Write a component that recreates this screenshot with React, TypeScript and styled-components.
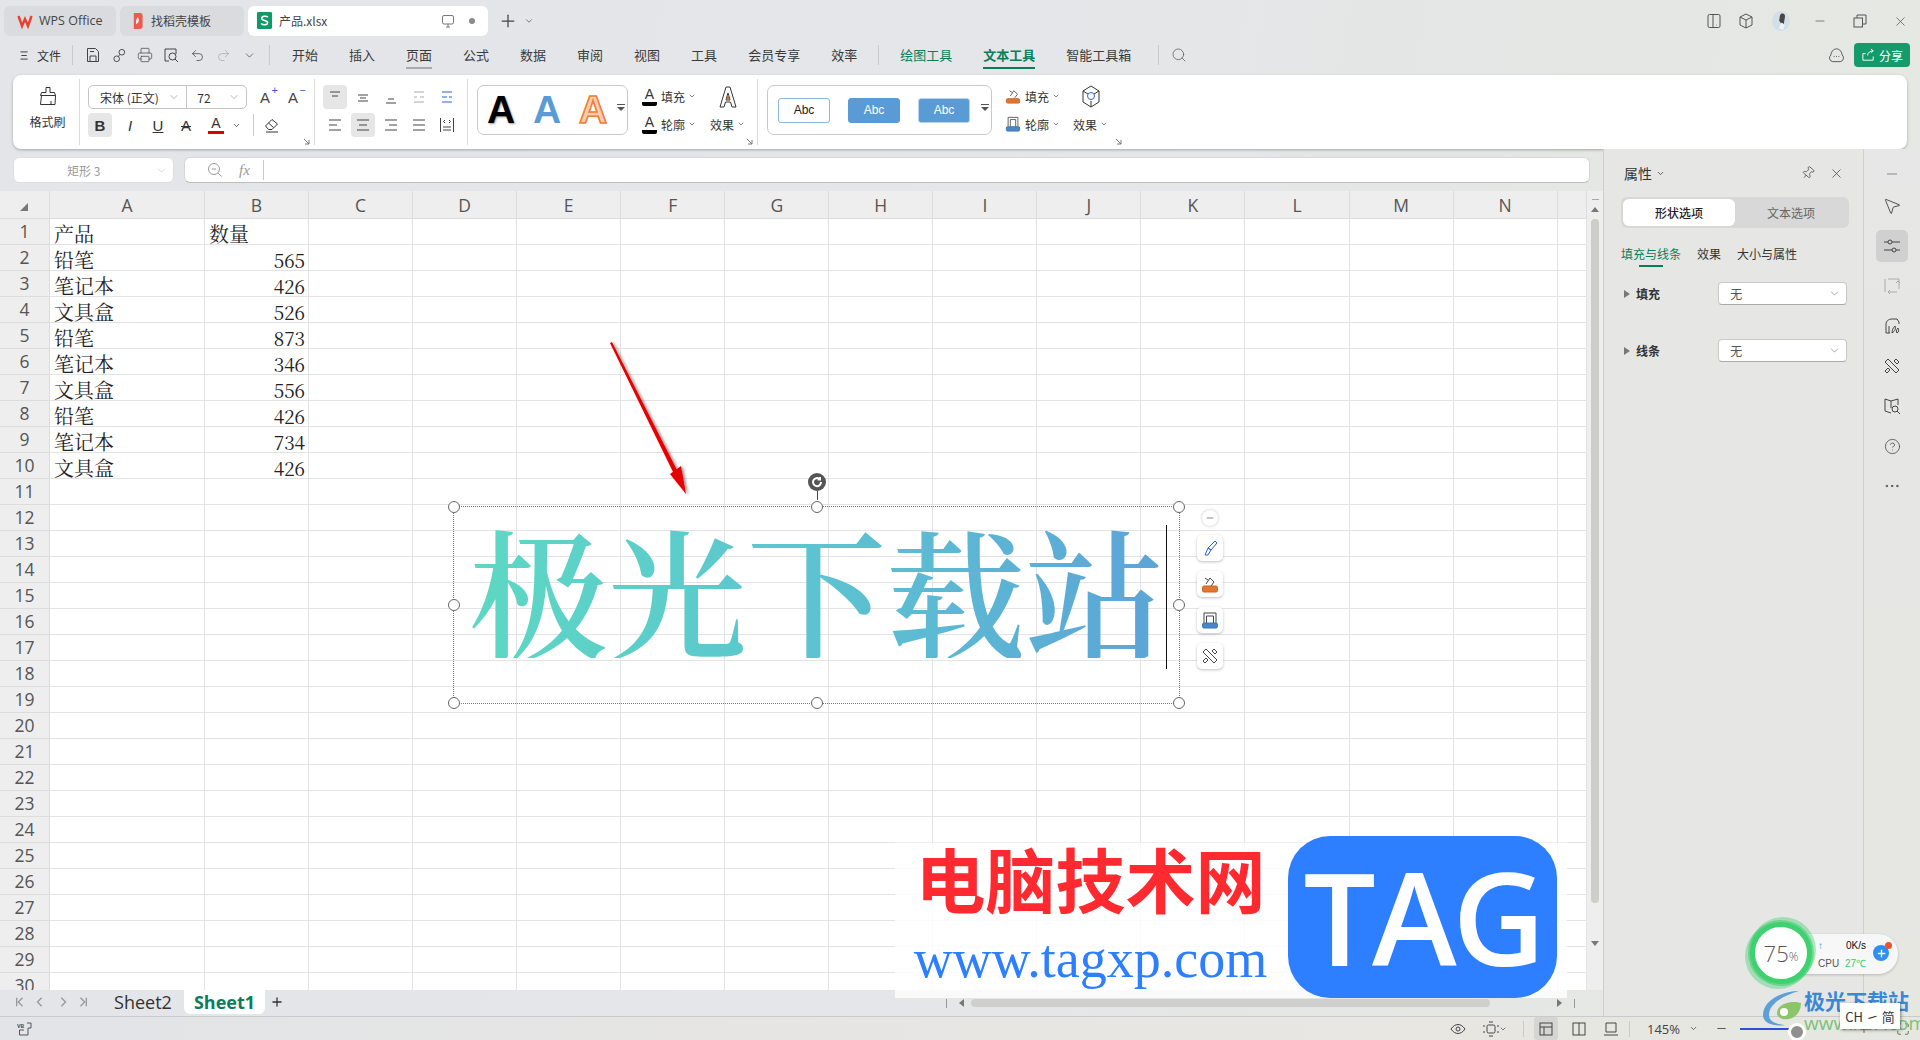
import React from "react";
import styled, { createGlobalStyle, css } from "styled-components";
import {
  ChevronDown,
  CircleHelp,
  Ellipsis,
  Maximize,
  Minus,
  MousePointer2,
  Pin,
  Plus,
  Printer,
  Redo2,
  Search,
  Undo2,
  X,
} from "lucide-react";

const UI_FONT = `"Noto Sans CJK SC", "Open Sans", sans-serif`;
const CELL_FONT = `"Noto Serif CJK SC", "Liberation Serif", "Noto Sans CJK SC", serif`;

const GlobalStyle = createGlobalStyle`
  html, body { margin: 0; padding: 0; background: #e4e6e6; }
  * { box-sizing: border-box; }
`;

const Page = styled.div`
  position: relative;
  width: 1920px;
  height: 1040px;
  overflow: hidden;
  display: flex;
  flex-direction: column;
  font-family: ${UI_FONT};
  font-size: 12px;
  color: #333;
  background: linear-gradient(100deg, #e3e5e9 0%, #e4e6e8 55%, #e6e8e1 100%);
`;

const Ic = styled.svg<{ $s?: number }>`
  width: ${(p) => p.$s ?? 16}px;
  height: ${(p) => p.$s ?? 16}px;
  flex: none;
  fill: none;
  stroke: currentColor;
  stroke-width: 1;
`;

/* ---------- title bar ---------- */

const TitleBar = styled.div`
  height: 37px;
  padding: 6px 0 1px 4px;
  display: flex;
  align-items: stretch;
  gap: 4px;
`;

const Tab = styled.div<{ $w: number; $active?: boolean }>`
  width: ${(p) => p.$w}px;
  display: flex;
  align-items: center;
  padding-left: 13px;
  padding-bottom: 1px;
  gap: 6px;
  border-radius: 6px;
  background: ${(p) => (p.$active ? "#fff" : "#d9dbde")};
  &:nth-child(2) { padding-left: 9px; }
  &:nth-child(3) { padding-left: 8px; }
`;

const TabLabel = styled.span<{ $latin?: boolean }>`
  font-family: ${(p) => (p.$latin ? `"Open Sans", sans-serif` : UI_FONT)};
  font-size: ${(p) => (p.$latin ? 12.5 : 12)}px;
  color: #444;
  white-space: nowrap;
`;

const TabRight = styled.div`
  margin-left: auto;
  display: flex;
  align-items: center;
  gap: 14px;
  padding-right: 13px;
  color: #777;
`;

const SmallDot = styled.i`
  width: 6px;
  height: 6px;
  border-radius: 50%;
  background: #8a8a8a;
`;

const NewTab = styled.div`
  display: flex;
  align-items: center;
  gap: 6px;
  margin-left: 6px;
  color: #444;
`;

const TitleRight = styled.div`
  margin-left: auto;
  display: flex;
  align-items: center;
  color: #555;
`;

const TitleBtn = styled.div<{ $w: number }>`
  width: ${(p) => p.$w}px;
  display: flex;
  justify-content: center;
`;

/* ---------- menu bar ---------- */

const MenuBar = styled.div`
  height: 38px;
  display: flex;
  align-items: center;
  padding: 0 10px 2px 20px;
`;

const FileBtn = styled.div`
  display: flex;
  align-items: center;
  gap: 8px;
  width: 52px;
  font-size: 12px;
`;

const VSep = styled.i<{ $h?: number; $ml?: number; $mr?: number }>`
  width: 1px;
  height: ${(p) => p.$h ?? 20}px;
  flex: none;
  background: #c8cacc;
  margin: 0 ${(p) => p.$mr ?? 0}px 0 ${(p) => p.$ml ?? 0}px;
`;

const Qat = styled.div`
  display: flex;
  align-items: center;
  width: 196px;
  padding-left: 7px;
`;

const QatBtn = styled.div<{ $off?: boolean }>`
  width: 26px;
  display: flex;
  justify-content: center;
  color: ${(p) => (p.$off ? "#aaa" : "#444")};
`;

const MenuItems = styled.div`
  display: flex;
  align-items: center;
  gap: 31px;
  margin-left: 22px;
`;

const MenuItem = styled.div<{ $tone?: "grey" | "green" | "strong" }>`
  position: relative;
  font-size: 13px;
  line-height: 26px;
  white-space: nowrap;
  color: ${(p) => (p.$tone === "green" || p.$tone === "strong" ? "#0b7d5a" : "#3a3a3a")};
  font-weight: ${(p) => (p.$tone === "strong" ? 700 : 400)};
  ${(p) =>
    (p.$tone === "grey" || p.$tone === "strong") &&
    css`
      &::after {
        content: "";
        position: absolute;
        left: 0;
        right: 0;
        bottom: -1px;
        height: 2px;
        background: ${p.$tone === "grey" ? "#aaaaaa" : "#0b7d5a"};
      }
    `}
`;

const ShareBtn = styled.div`
  width: 56px;
  height: 24px;
  display: flex;
  align-items: center;
  justify-content: center;
  gap: 3px;
  border-radius: 4px;
  background: #149a6b;
  color: #fff;
  font-size: 12px;
`;

/* ---------- ribbon ---------- */

const Ribbon = styled.div`
  height: 74px;
  margin: 0 13px;
  padding: 4px 0;
  display: flex;
  background: #fff;
  border-radius: 8px;
  box-shadow: 0 1px 3px rgba(0, 0, 0, 0.28);
`;

const Group = styled.div<{ $w?: number; $pl?: number; $noline?: boolean }>`
  position: relative;
  width: ${(p) => (p.$w ? `${p.$w}px` : "auto")};
  padding: 6px 0 0 ${(p) => p.$pl ?? 8}px;
  display: flex;
  border-right: ${(p) => (p.$noline ? "none" : "1px solid #dcdcdc")};
`;

const Launcher = styled.svg<{ $r: number }>`
  position: absolute;
  right: ${(p) => p.$r}px;
  bottom: 0;
  width: 7px;
  height: 7px;
  fill: none;
  stroke: #777;
`;

const PainterBtn = styled.div`
  width: 100%;
  padding: 1px 0 0 3px;
  display: flex;
  flex-direction: column;
  align-items: center;
  gap: 7px;
  font-size: 12px;
`;

const Stack = styled.div<{ $ml?: number }>`
  margin-left: ${(p) => p.$ml ?? 0}px;
  display: flex;
  flex-direction: column;
  gap: 4px;
`;

const Row = styled.div`
  height: 24px;
  display: flex;
  align-items: center;
`;

const FontBox = styled.div`
  width: 159px;
  height: 24px;
  display: flex;
  align-items: center;
  border: 1px solid #c4c4c4;
  border-radius: 5px;
  font-size: 12px;
`;

const FontPart = styled.div<{ $w: number; $line?: boolean; $pl: number }>`
  width: ${(p) => p.$w}px;
  height: 100%;
  padding: 0 6px 0 ${(p) => p.$pl}px;
  display: flex;
  align-items: center;
  justify-content: space-between;
  border-right: ${(p) => (p.$line ? "1px solid #c4c4c4" : "none")};
  color: #333;
  & svg { color: #888; }
`;

const GrowBtn = styled.span`
  position: relative;
  width: 28px;
  text-align: center;
  font: 15px "Liberation Sans", sans-serif;
  color: #444;
  & > b {
    position: absolute;
    top: -5px;
    right: 1px;
    font-size: 11px;
    font-weight: 400;
    color: #2a62d8;
  }
`;

const ToolBtn = styled.div<{ $w?: number; $on?: boolean; $tint?: string }>`
  width: ${(p) => p.$w ?? 24}px;
  height: 24px;
  flex: none;
  display: flex;
  align-items: center;
  justify-content: center;
  border-radius: 4px;
  color: ${(p) => p.$tint ?? "#444"};
  background: ${(p) => (p.$on ? "#e6e6e6" : "transparent")};
`;

const Letter = styled.span<{ $kind: "b" | "i" | "u" | "s" }>`
  font-family: "Liberation Sans", sans-serif;
  font-size: 15px;
  color: #333;
  font-weight: ${(p) => (p.$kind === "b" ? 700 : 400)};
  font-style: ${(p) => (p.$kind === "i" ? "italic" : "normal")};
  text-decoration: ${(p) => (p.$kind === "u" ? "underline" : p.$kind === "s" ? "line-through" : "none")};
`;

const ColorA = styled.span<{ $bar?: string; $w?: number }>`
  display: inline-block;
  width: ${(p) => p.$w ?? 16}px;
  text-align: center;
  font: 14px/15px "Liberation Sans", sans-serif;
  color: #333;
  border-bottom: ${(p) => (p.$bar ? 4 : 3)}px solid ${(p) => p.$bar ?? "#e00000"};
  border-radius: ${(p) => (p.$bar ? 2 : 0)}px;
`;

const AlignGrid = styled.div`
  display: grid;
  grid-template-columns: repeat(5, 24px);
  grid-auto-rows: 24px;
  column-gap: 4px;
  row-gap: 4px;
`;

const Gallery = styled.div<{ $w: number }>`
  width: ${(p) => p.$w}px;
  height: 50px;
  flex: none;
  position: relative;
  display: flex;
  align-items: center;
  gap: ${(p) => (p.$w > 200 ? 18 : 0)}px;
  padding-left: ${(p) => (p.$w > 200 ? 10 : 0)}px;
  border: 1px solid #c9c9c9;
  border-radius: 7px;
`;

const GalleryDrop = styled.span`
  position: absolute;
  right: 2px;
  top: 18px;
  width: 8px;
  height: 8px;
  border-top: 1px solid #555;
  &::after {
    content: "";
    position: absolute;
    left: 0;
    top: 2px;
    border: 4px solid transparent;
    border-top: 4px solid #555;
  }
`;

const BigA = styled.span<{ $kind: "black" | "blue" | "outline" }>`
  width: 46px;
  padding-bottom: 2px;
  text-align: center;
  font: 700 39px/1 "Liberation Sans", sans-serif;
  ${(p) =>
    p.$kind === "black" &&
    css`
      color: #000;
      text-shadow: 1px 1px 2px rgba(0, 0, 0, 0.4);
    `}
  ${(p) => p.$kind === "blue" && css`color: #5b9bd5;`}
  ${(p) =>
    p.$kind === "outline" &&
    css`
      color: #f9ceb0;
      -webkit-text-stroke: 1.6px #ed7d31;
    `}
`;

const AbcTile = styled.div<{ $kind: "plain" | "solid" | "edge" }>`
  width: 52px;
  height: 25px;
  display: flex;
  align-items: center;
  justify-content: center;
  border-radius: 3px;
  font: 12px "Liberation Sans", sans-serif;
  color: ${(p) => (p.$kind === "plain" ? "#222" : "#fff")};
  background: ${(p) => (p.$kind === "plain" ? "#fff" : "#5b9bd5")};
  border: 1.5px solid ${(p) => (p.$kind === "plain" ? "#8ab6e0" : p.$kind === "edge" ? "#b9d3ec" : "#5b9bd5")};
`;

const FxBtn = styled.div`
  height: 24px;
  padding-bottom: 2px;
  display: flex;
  align-items: center;
  gap: 4px;
  font-size: 12px;
  color: #333;
  & > svg:last-child { color: #444; margin-left: -1px; }
`;

const FxCol = styled.div<{ $ml: number }>`
  margin-left: ${(p) => p.$ml}px;
  display: flex;
  flex-direction: column;
  align-items: center;
  gap: 4px;
`;

/* ---------- work area ---------- */

const Work = styled.div`
  flex: 1;
  min-height: 0;
  display: flex;
`;

const LeftCol = styled.div`
  width: 1603px;
  display: flex;
  flex-direction: column;
`;

const FormulaRow = styled.div`
  height: 42px;
  padding: 8px 13px;
  display: flex;
  gap: 10px;
`;

const NameBox = styled.div`
  width: 161px;
  padding: 0 5px 0 53px;
  display: flex;
  align-items: center;
  justify-content: space-between;
  background: #fff;
  border: 1px solid #dedede;
  border-radius: 6px;
  color: #999;
  font-size: 12px;
`;

const FormulaBox = styled.div`
  width: 1406px;
  padding-left: 22px;
  display: flex;
  align-items: center;
  background: #fff;
  border: 1px solid #d6d6d6;
  border-bottom-color: #bdbdbd;
  border-radius: 6px;
  color: #999;
`;

const FxText = styled.span`
  margin: 0 13px 0 16px;
  font: italic 15px "Liberation Serif", serif;
  color: #999;
`;

const SheetWrap = styled.div`
  flex: 1;
  min-height: 0;
  display: flex;
`;

const Grid = styled.div`
  width: 1587px;
  display: grid;
  grid-template-columns: 50px 155px repeat(13, 104.05px) 1fr;
  grid-template-rows: 28px repeat(30, 26px);
  overflow: hidden;
  background: #fff;
`;

const CornerCell = styled.div`
  background: #eeeeee;
  display: flex;
  align-items: flex-end;
  justify-content: flex-end;
  padding: 0 21px 7px 0;
  border-bottom: 1px solid #dcdcdc;
  border-right: 1px solid #dcdcdc;
  &::after {
    content: "";
    border: 4px solid transparent;
    border-right-color: #777;
    border-bottom-color: #777;
  }
`;

const ColHead = styled.div`
  background: #eeeeee;
  display: flex;
  align-items: center;
  justify-content: center;
  font: 17.5px "Open Sans", sans-serif;
  color: #555;
  border-right: 1px solid #dcdcdc;
  border-bottom: 1px solid #dcdcdc;
`;

const RowHead = styled(ColHead)`
  padding-bottom: 2px;
`;

const Cell = styled.div<{ $num?: boolean }>`
  display: flex;
  align-items: flex-end;
  justify-content: ${(p) => (p.$num ? "flex-end" : "flex-start")};
  padding: 0 3px 0 4px;
  font-family: ${CELL_FONT};
  font-size: ${(p) => (p.$num ? 19 : 20)}px;
  line-height: 20px;
  color: #222;
  border-right: 1px solid #e3e3e3;
  border-bottom: 1px solid #e3e3e3;
  white-space: nowrap;
`;

const VScroll = styled.div`
  flex: 1;
  display: flex;
  flex-direction: column;
  align-items: center;
  background: #eeeeee;
  padding-top: 8px;
`;

const ScrollStub = styled.i`
  width: 7px;
  height: 1px;
  background: #aaa;
`;

const ScrollArrow = styled.i<{ $down?: boolean; $mt: number }>`
  margin-top: ${(p) => p.$mt}px;
  border: 4px solid transparent;
  ${(p) =>
    p.$down
      ? css`border-top: 5px solid #777; border-bottom: 0;`
      : css`border-bottom: 5px solid #777; border-top: 0;`}
`;

const ScrollThumb = styled.i`
  width: 8px;
  height: 684px;
  margin-top: 7px;
  border-radius: 4px;
  background: #cdcdca;
`;

const SheetBar = styled.div`
  height: 26px;
  display: flex;
  align-items: flex-start;
`;

const SheetNav = styled.div`
  width: 115px;
  padding: 7px 0 0 15px;
  display: flex;
  gap: 10px;
  color: #999;
  & svg { stroke-width: 1.6; }
  & svg:nth-child(3) { margin-left: 3px; }
`;

const SheetTab = styled.div<{ $active?: boolean }>`
  height: 24px;
  display: flex;
  align-items: center;
  justify-content: center;
  border-radius: 0 0 6px 6px;
  font: ${(p) => (p.$active ? 700 : 400)} 18px "Open Sans", sans-serif;
  color: ${(p) => (p.$active ? "#0b7d5a" : "#333")};
  background: ${(p) => (p.$active ? "#fff" : "transparent")};
  width: ${(p) => (p.$active ? 81 : 56)}px;
  margin-left: ${(p) => (p.$active ? 13 : 0)}px;
`;

const AddSheet = styled.div`
  margin: 5px 0 0 5px;
  color: #333;
`;

const HScroll = styled.div`
  width: 637px;
  height: 16px;
  margin: 5px 20px 0 auto;
  display: flex;
  align-items: center;
  color: #777;
`;

const HTick = styled.i`
  width: 1px;
  height: 9px;
  background: #999;
  flex: none;
`;

const HThumb = styled.i`
  width: 519px;
  height: 8px;
  margin: 0 67px 0 7px;
  border-radius: 4px;
  background: #cfcfcc;
  flex: none;
`;

const HArrow = styled.i<{ $right?: boolean }>`
  margin-left: ${(p) => (p.$right ? 0 : 12)}px;
  margin-right: ${(p) => (p.$right ? 12 : 0)}px;
  border: 4px solid transparent;
  ${(p) =>
    p.$right
      ? css`border-left: 5px solid #777; border-right: 0;`
      : css`border-right: 5px solid #777; border-left: 0;`}
`;

/* ---------- properties panel ---------- */

const Panel = styled.div`
  width: 261px;
  padding: 0 16px 0 17px;
  background: #e6e7e5;
  border-left: 1px solid #cfd0ce;
  border-right: 1px solid #cfd0ce;
  display: flex;
  flex-direction: column;
`;

const PanelHead = styled.div`
  height: 48px;
  padding-left: 3px;
  display: flex;
  align-items: center;
  font-size: 14px;
  color: #333;
  & > svg:nth-child(1) { margin-left: 4px; }
`;

const PanelHeadRight = styled.div`
  margin-left: auto;
  display: flex;
  gap: 14px;
  padding-right: 3px;
  color: #444;
`;

const Segment = styled.div`
  width: 228px;
  height: 31px;
  padding: 2px;
  display: flex;
  border-radius: 6px;
  background: #d7d8d7;
`;

const SegmentItem = styled.div<{ $active?: boolean }>`
  flex: 1;
  display: flex;
  align-items: center;
  justify-content: center;
  font-size: 12px;
  border-radius: 6px;
  color: ${(p) => (p.$active ? "#222" : "#666")};
  font-weight: ${(p) => (p.$active ? 500 : 400)};
  background: ${(p) => (p.$active ? "#fff" : "transparent")};
`;

const SubTabs = styled.div`
  margin-top: 16px;
  height: 22px;
  display: flex;
  gap: 16px;
`;

const SubTab = styled.div<{ $active?: boolean }>`
  position: relative;
  font-size: 12px;
  line-height: 20px;
  color: ${(p) => (p.$active ? "#0b7d5a" : "#333")};
  ${(p) =>
    p.$active &&
    css`
      &::after {
        content: "";
        position: absolute;
        left: 18px;
        width: 24px;
        bottom: -1px;
        height: 2px;
        background: #0b7d5a;
      }
    `}
`;

const PropRow = styled.div<{ $mt: number }>`
  margin-top: ${(p) => p.$mt}px;
  height: 23px;
  display: flex;
  align-items: center;
`;

const PropArrow = styled.i`
  margin-left: 3px;
  border: 4px solid transparent;
  border-left: 6px solid #777;
  border-right: 0;
`;

const PropLabel = styled.span`
  margin-left: 6px;
  width: 83px;
  font-size: 12px;
  font-weight: 700;
  color: #333;
`;

const PropSelect = styled.div`
  width: 130px;
  height: 23px;
  padding: 0 5px 0 11px;
  display: flex;
  align-items: center;
  justify-content: space-between;
  background: #fff;
  border: 1px solid #c8c8c8;
  border-bottom-color: #aaa;
  border-radius: 4px;
  font-size: 12px;
  color: #555;
  & svg { color: #777; }
`;

const SideBar = styled.div`
  width: 56px;
  padding-top: 9px;
  display: flex;
  flex-direction: column;
  align-items: center;
  background: linear-gradient(180deg, #e6e7e6 0%, #e6e7e1 100%);
`;

const SideBtn = styled.div<{ $on?: boolean; $off?: boolean; $mb?: number }>`
  width: 32px;
  height: 32px;
  margin-bottom: ${(p) => p.$mb ?? 8}px;
  display: flex;
  align-items: center;
  justify-content: center;
  border-radius: 5px;
  background: ${(p) => (p.$on ? "#cfd0cf" : "transparent")};
  color: ${(p) => (p.$off ? "#aaa" : "#444")};
`;

/* ---------- status bar ---------- */

const StatusBar = styled.div`
  height: 24px;
  display: flex;
  align-items: center;
  border-top: 1px solid #c9cac9;
  color: #444;
  background: linear-gradient(90deg, #e2e4e7 0%, #e8e6e2 60%, #e6e7e0 100%);
`;

const VbIcon = styled.svg`
  margin-left: 17px;
  width: 15px;
  height: 14px;
  fill: none;
  stroke: #555;
  & text {
    font: 700 6px "Liberation Mono", monospace;
    fill: #555;
    stroke: none;
  }
`;

const StatusGroup = styled.div`
  margin-left: auto;
  display: flex;
  align-items: center;
  padding-right: 10px;
`;

const StatusBtn = styled.div<{ $w: number; $on?: boolean; $ml?: number }>`
  width: ${(p) => p.$w}px;
  height: 23px;
  margin-left: ${(p) => p.$ml ?? 0}px;
  display: flex;
  align-items: center;
  justify-content: center;
  background: ${(p) => (p.$on ? "#d5d6d4" : "transparent")};
  border-radius: 3px;
`;

const ZoomText = styled.span`
  margin-left: 16px;
  width: 30px;
  font: 13px "Open Sans", sans-serif;
  color: #444;
  white-space: nowrap;
`;

const Slider = styled.div`
  position: relative;
  width: 60px;
  height: 2px;
  margin: 0 58px 0 12px;
  background: #2a52d8;
  &::after {
    content: "";
    position: absolute;
    right: -6px;
    top: -5px;
    width: 12px;
    height: 12px;
    border-radius: 50%;
    background: #8f8f8f;
    border: 3px solid #fff;
  }
`;

/* ---------- shape on the sheet ---------- */

const Shape = styled.div`
  position: absolute;
  left: 453px;
  top: 506px;
  width: 727px;
  height: 198px;
  border: 1px dotted #777;
  display: flex;
  align-items: center;
  padding: 0 0 16px 15px;
`;

const ShapeText = styled.span`
  margin-bottom: 18px;
  font-family: ${CELL_FONT};
  font-size: 139px;
  font-weight: 600;
  line-height: 1;
  white-space: nowrap;
  background: linear-gradient(90deg, #5dd8c3 0%, #5cc4d0 50%, #5ca4d8 100%);
  -webkit-background-clip: text;
  background-clip: text;
  color: transparent;
`;

const Caret = styled.i`
  width: 1px;
  height: 144px;
  margin-left: 2px;
  background: #111;
  flex: none;
`;

const Handle = styled.i<{ $x: number; $y: number }>`
  position: absolute;
  left: calc(${(p) => p.$x}% - 6px);
  top: calc(${(p) => p.$y}% - 6px);
  width: 12px;
  height: 12px;
  border-radius: 50%;
  background: #fff;
  border: 1px solid #666;
`;

const RotateHandle = styled.div`
  position: absolute;
  left: 354px;
  top: -34px;
  width: 18px;
  height: 18px;
  border-radius: 50%;
  background: #555;
  color: #fff;
  display: flex;
  align-items: center;
  justify-content: center;
  &::after {
    content: "";
    position: absolute;
    left: 8.5px;
    top: 18px;
    width: 1px;
    height: 9px;
    background: #444;
  }
`;

const Arrow = styled.svg`
  position: absolute;
  left: 600px;
  top: 335px;
  width: 100px;
  height: 170px;
`;

const MiniBar = styled.div`
  position: absolute;
  left: 1197px;
  top: 510px;
  width: 26px;
  display: flex;
  flex-direction: column;
  align-items: center;
  gap: 10px;
`;

const MiniCollapse = styled.div`
  width: 16px;
  height: 16px;
  margin-bottom: -1px;
  border-radius: 50%;
  background: #fff;
  box-shadow: 0 0 3px rgba(0, 0, 0, 0.25);
  color: #888;
  display: flex;
  align-items: center;
  justify-content: center;
`;

const MiniBtn = styled.div<{ $tint?: string }>`
  width: 26px;
  height: 26px;
  border-radius: 5px;
  background: #fff;
  box-shadow: 0 1px 3px rgba(0, 0, 0, 0.25);
  display: flex;
  align-items: center;
  justify-content: center;
  color: ${(p) => p.$tint ?? "#444"};
`;

/* ---------- overlays: watermark, widget ---------- */

const Watermark = styled.div`
  position: absolute;
  left: 895px;
  top: 836px;
  width: 672px;
  height: 162px;
  padding-top: 7px;
  display: flex;
  background: linear-gradient(180deg, transparent 0, transparent 6px, rgba(255, 255, 255, 0.82) 7px);
`;

const WmText = styled.div`
  width: 393px;
  display: flex;
  flex-direction: column;
  align-items: center;
  padding-right: 2px;
`;

const WmTitle = styled.div`
  margin-top: -6px;
  font: 700 70px/82px "Noto Sans CJK SC", sans-serif;
  color: #ff2a2f;
  white-space: nowrap;
`;

const WmUrl = styled.div`
  margin-top: 10px;
  font: 54px/60px "Liberation Serif", serif;
  color: #2e7fff;
  white-space: nowrap;
`;

const TagLogo = styled.div`
  width: 269px;
  height: 162px;
  margin-top: -7px;
  border-radius: 42px;
  background: #2e7fff;
  color: #fff;
  display: flex;
  align-items: center;
  justify-content: center;
  font: 600 128px/1 "Open Sans", sans-serif;
  letter-spacing: -4px;
`;

const Widget = styled.div`
  position: absolute;
  left: 1790px;
  top: 934px;
  width: 108px;
  height: 40px;
  padding-left: 28px;
  border-radius: 0 20px 20px 0;
  background: #f7f7f7;
  box-shadow: 0 1px 3px rgba(0, 0, 0, 0.2);
  display: flex;
  flex-direction: column;
  justify-content: center;
  font: 10px "Liberation Sans", sans-serif;
`;

const WidgetLine = styled.div`
  width: 48px;
  height: 18px;
  display: flex;
  align-items: center;
  justify-content: space-between;
  color: #555;
`;

const WidgetValue = styled.span<{ $c: string }>`
  color: ${(p) => p.$c};
`;

const Gauge = styled.div`
  position: absolute;
  left: 1750px;
  top: 922px;
  width: 62px;
  height: 62px;
  border-radius: 50%;
  background: #fff;
  border: 5px solid #3fd070;
  box-shadow: 0 0 0 2px rgba(63, 208, 112, 0.6), -3px 3px 0 2px rgba(63, 208, 112, 0.4),
    2px -3px 0 2px rgba(63, 208, 112, 0.4);
  display: flex;
  align-items: center;
  justify-content: center;
  font: 300 22px "Open Sans", sans-serif;
  color: #555;
  & small { font-size: 12px; margin-top: 7px; }
`;

const WidgetPlus = styled.div`
  position: absolute;
  left: 1873px;
  top: 945px;
  width: 16px;
  height: 16px;
  border-radius: 50%;
  background: #2e8ff0;
  color: #fff;
  display: flex;
  align-items: center;
  justify-content: center;
  &::after {
    content: "";
    position: absolute;
    right: -3px;
    top: -3px;
    width: 7px;
    height: 7px;
    border-radius: 50%;
    background: #f0502c;
  }
`;

const XzLogo = styled.svg`
  position: absolute;
  left: 1761px;
  top: 989px;
  width: 42px;
  height: 42px;
`;

const XzText = styled.div`
  position: absolute;
  left: 1804px;
  top: 986px;
  width: 110px;
  font: 700 21px/28px "Noto Sans CJK SC", sans-serif;
  color: #3a87d6;
  white-space: nowrap;
`;

const XzUrl = styled.div`
  font: 19px/18px "Open Sans", sans-serif;
  color: #7cc27a;
`;

const ImeTip = styled.div`
  position: absolute;
  left: 1840px;
  top: 1003px;
  width: 60px;
  height: 26px;
  display: flex;
  align-items: center;
  justify-content: center;
  background: #fff;
  box-shadow: 1px 1px 3px rgba(0, 0, 0, 0.45);
  font-size: 13px;
  color: #333;
`;

/* ---------- data ---------- */

const COLS = ["A", "B", "C", "D", "E", "F", "G", "H", "I", "J", "K", "L", "M", "N"];
const DATA: [string, string][] = [
  ["产品", "数量"],
  ["铅笔", "565"],
  ["笔记本", "426"],
  ["文具盒", "526"],
  ["铅笔", "873"],
  ["笔记本", "346"],
  ["文具盒", "556"],
  ["铅笔", "426"],
  ["笔记本", "734"],
  ["文具盒", "426"],
];

const MENUS: { label: string; tone?: "grey" }[] = [
  { label: "开始" },
  { label: "插入" },
  { label: "页面", tone: "grey" },
  { label: "公式" },
  { label: "数据" },
  { label: "审阅" },
  { label: "视图" },
  { label: "工具" },
  { label: "会员专享" },
  { label: "效率" },
];

const AlignIcon = ({ lines }: { lines: [number, number, number][] }) => (
  <Ic viewBox="0 0 16 16" $s={16}>
    {lines.map(([x1, x2, y], i) => (
      <path key={i} d={`M${x1} ${y}H${x2}`} />
    ))}
  </Ic>
);

const Down = ({ s = 9 }: { s?: number }) => <ChevronDown size={s} strokeWidth={2} />;

const Corner = ({ r }: { r: number }) => (
  <Launcher viewBox="0 0 7 7" $r={r}>
    <path d="M1 1l5 5M2 6h4V2" />
  </Launcher>
);

const Tools = () => (
  <Ic viewBox="0 0 18 18" $s={18}>
    <path d="M5 2l11 11-3 3L2 5zM13 2l3 3-2 2-3-3zM5 11l2 2-3 3-2-2z" />
  </Ic>
);

const App: React.FC = () => {
  const rows = Array.from({ length: 30 }, (_, i) => i);
  return (
    <Page>
      <GlobalStyle />
      <TitleBar>
        <Tab $w={112}>
          <Ic viewBox="0 0 16 16" $s={16} style={{ stroke: "#e8402f", strokeWidth: 2.4 }}>
            <path d="M1.5 3l3.5 10 3-7 3 7 3.5-10" />
          </Ic>
          <TabLabel $latin>WPS Office</TabLabel>
        </Tab>
        <Tab $w={124}>
          <Ic viewBox="0 0 14 20" $s={16} style={{ stroke: "none", fill: "#ef5a50" }}>
            <path d="M3 0h8a3 3 0 013 3v14a3 3 0 01-3 3H3z" />
            <path d="M8 5c2 3 2 7-2 9 0-3-1-4 2-9z" fill="#fff" />
          </Ic>
          <TabLabel>找稻壳模板</TabLabel>
        </Tab>
        <Tab $w={240} $active>
          <Ic viewBox="0 0 16 18" $s={17} style={{ stroke: "none" }}>
            <rect width="16" height="18" rx="1.5" fill="#109a6a" />
            <path d="M11.5 5.5C10 3.8 5 4 5 6.7c0 3 6.3 1.6 6.3 4.7 0 2.6-5 2.8-6.8.8" stroke="#fff" strokeWidth="1.6" fill="none" />
          </Ic>
          <TabLabel>产品.xlsx</TabLabel>
          <TabRight>
            <Ic viewBox="0 0 14 14" $s={14}>
              <rect x="1.5" y="1.5" width="11" height="8.5" rx="1.5" />
              <path d="M5 13h4M7 10v3" />
            </Ic>
            <SmallDot />
          </TabRight>
        </Tab>
        <NewTab>
          <Plus size={20} strokeWidth={1.5} />
          <ChevronDown size={10} strokeWidth={1.6} />
        </NewTab>
        <TitleRight>
          <TitleBtn $w={32}>
            <Ic viewBox="0 0 16 16" $s={16}>
              <rect x="2" y="1.5" width="12" height="13" rx="1.5" />
              <path d="M7 1.500v13M10.500 12h.5" />
            </Ic>
          </TitleBtn>
          <TitleBtn $w={32}>
            <Ic viewBox="0 0 16 16" $s={16}>
              <path d="M8 1l6 3v8l-6 3-6-3V4zM2 4l6 3 6-3M8 7v8" />
            </Ic>
          </TitleBtn>
          <TitleBtn $w={38}>
            <Ic viewBox="0 0 20 21" $s={20} style={{ stroke: "none" }}>
              <ellipse cx="10" cy="10.500" rx="9.500" ry="10.500" fill="#d0dfe9" />
              <path d="M10 3c3-1 5 1 4 4l-1 6-2 5-1-5-2-3c1-2 0-5 2-7z" fill="#4c4443" />
              <path d="M8 18c1-3 1-5 3-6l3 3-2 5z" fill="#eef3f6" />
            </Ic>
          </TitleBtn>
          <TitleBtn $w={40}>
            <Minus size={14} strokeWidth={1.2} />
          </TitleBtn>
          <TitleBtn $w={40}>
            <Ic viewBox="0 0 14 14" $s={14}>
              <rect x="1" y="4" width="8.5" height="9" />
              <path d="M4 4V1h9v9h-3.500" />
            </Ic>
          </TitleBtn>
          <TitleBtn $w={40}>
            <X size={15} strokeWidth={1.2} />
          </TitleBtn>
        </TitleRight>
      </TitleBar>

      <MenuBar>
        <FileBtn>
          <Ic viewBox="0 0 9 10" $s={9}>
            <path d="M0 1h8M1 5h6M0 9h8" />
          </Ic>
          文件
        </FileBtn>
        <VSep />
        <Qat>
          <QatBtn>
            <Ic viewBox="0 0 16 16" $s={16}>
              <path d="M2.500 1.500h8l3 3v10h-11zM5 14.500V9h6v5.500M5 4.500h4" />
            </Ic>
          </QatBtn>
          <QatBtn>
            <Ic viewBox="0 0 16 16" $s={15}>
              <circle cx="10.500" cy="4.500" r="3" />
              <circle cx="5" cy="11.500" r="3" />
              <path d="M8 7l-1 2" />
            </Ic>
          </QatBtn>
          <QatBtn>
            <Printer size={16} strokeWidth={1.1} />
          </QatBtn>
          <QatBtn>
            <Ic viewBox="0 0 16 16" $s={16}>
              <path d="M6 14H2V2h11v5" />
              <circle cx="9.500" cy="9.500" r="3.500" />
              <path d="M12 12l3 3" />
            </Ic>
          </QatBtn>
          <QatBtn>
            <Undo2 size={15} strokeWidth={1.2} />
          </QatBtn>
          <QatBtn $off>
            <Redo2 size={15} strokeWidth={1.2} />
          </QatBtn>
          <QatBtn>
            <ChevronDown size={13} strokeWidth={1.3} />
          </QatBtn>
        </Qat>
        <VSep />
        <MenuItems>
          {MENUS.map((m) => (
            <MenuItem key={m.label} $tone={m.tone}>
              {m.label}
            </MenuItem>
          ))}
          <VSep $ml={-10} $mr={-10} />
          <MenuItem $tone="green">绘图工具</MenuItem>
          <MenuItem $tone="strong">文本工具</MenuItem>
          <MenuItem>智能工具箱</MenuItem>
          <VSep $ml={-4} $mr={-19} />
          <Search size={16} strokeWidth={1.1} color="#555" />
        </MenuItems>
        <TitleRight>
          <TitleBtn $w={36}>
            <Ic viewBox="0 0 18 18" $s={17}>
              <path d="M5 15.500a4 4 0 01-2-7C4 3 7 2 9 2s5 1 6 6.500a4 4 0 01-2 7z" />
              <path d="M6 10h1M8.500 10h1M11 10h1" />
            </Ic>
          </TitleBtn>
          <ShareBtn>
            <Ic viewBox="0 0 16 16" $s={15}>
              <path d="M13 9v4H2V6h3M7 8c0-3 3-5 6-5M10.500 1l2.500 2-2.500 2" />
            </Ic>
            分享
          </ShareBtn>
        </TitleRight>
      </MenuBar>

      <Ribbon>
        <Group $w={67} $pl={0}>
          <PainterBtn>
            <Ic viewBox="0 0 20 20" $s={20}>
              <path d="M8 1.500h4v5h4.500l1 3H2.500l1-3H8zM3.500 9.500l-1 9H17l.5-9M13 15v3.500" />
            </Ic>
            格式刷
          </PainterBtn>
        </Group>
        <Group $w={235}>
          <Stack>
            <Row>
              <FontBox>
                <FontPart $w={99} $pl={11} $line>
                  宋体 (正文) <ChevronDown size={12} strokeWidth={1.2} />
                </FontPart>
                <FontPart $w={59} $pl={10}>
                  72 <ChevronDown size={12} strokeWidth={1.2} />
                </FontPart>
              </FontBox>
              <GrowBtn style={{ marginLeft: 4 }}>
                A<b>+</b>
              </GrowBtn>
              <GrowBtn>
                A<b>−</b>
              </GrowBtn>
            </Row>
            <Row>
              <ToolBtn $on style={{ marginRight: 4 }}><Letter $kind="b">B</Letter></ToolBtn>
              <ToolBtn $w={28}><Letter $kind="i">I</Letter></ToolBtn>
              <ToolBtn $w={28}><Letter $kind="u">U</Letter></ToolBtn>
              <ToolBtn $w={28}><Letter $kind="s">A</Letter></ToolBtn>
              <ToolBtn $w={32}><ColorA>A</ColorA></ToolBtn>
              <Down />
              <VSep $h={22} $ml={12} $mr={10} />
              <Ic viewBox="0 0 16 16" $s={16}>
                <path d="M1.500 9L8 2.500 13.500 7 8 12.500H4.500zM4.500 6l5 4.500M2 15h12" />
              </Ic>
            </Row>
          </Stack>
          <Corner r={4} />
        </Group>
        <Group $w={153}>
          <AlignGrid>
            <ToolBtn $on><AlignIcon lines={[[3, 13, 3], [5, 11, 7]]} /></ToolBtn>
            <ToolBtn><AlignIcon lines={[[3, 13, 6], [5, 11, 9], [3, 13, 12]]} /></ToolBtn>
            <ToolBtn><AlignIcon lines={[[5, 11, 10], [3, 13, 14]]} /></ToolBtn>
            <ToolBtn $tint="#aaa"><AlignIcon lines={[[3, 13, 3], [9, 13, 8], [3, 6, 8], [3, 13, 13]]} /></ToolBtn>
            <ToolBtn $tint="#2a62d8"><AlignIcon lines={[[3, 13, 3], [3, 8, 8], [10, 13, 8], [3, 13, 13]]} /></ToolBtn>
            <ToolBtn><AlignIcon lines={[[2, 14, 3], [2, 10, 8], [2, 14, 13]]} /></ToolBtn>
            <ToolBtn $on><AlignIcon lines={[[2, 14, 3], [4, 12, 8], [2, 14, 13]]} /></ToolBtn>
            <ToolBtn><AlignIcon lines={[[2, 14, 3], [6, 14, 8], [2, 14, 13]]} /></ToolBtn>
            <ToolBtn><AlignIcon lines={[[2, 14, 3], [2, 14, 8], [2, 14, 13]]} /></ToolBtn>
            <ToolBtn>
              <Ic viewBox="0 0 16 16" $s={16}>
                <path d="M1.500 1v14M14.500 1v14M4 10h8M4 13h8M6 3L4.500 4.500 6 6M10 3l1.500 1.500L10 6" />
              </Ic>
            </ToolBtn>
          </AlignGrid>
        </Group>
        <Group $w={290} $pl={9}>
          <Gallery $w={151}>
            <BigA $kind="black">A</BigA>
            <BigA $kind="blue">A</BigA>
            <BigA $kind="outline">A</BigA>
            <GalleryDrop />
          </Gallery>
          <Stack $ml={14}>
            <FxBtn>
              <ColorA $bar="#000" $w={15}>A</ColorA>
              填充 <Down s={8} />
            </FxBtn>
            <FxBtn>
              <ColorA $bar="#000" $w={15}>A</ColorA>
              轮廓 <Down s={8} />
            </FxBtn>
          </Stack>
          <FxCol $ml={14}>
            <Ic viewBox="0 0 20 24" $s={24}>
              <path d="M8 2h4l6 20h-4l-1.500-5h-5L6 22H2zM10 8l2 7H8z" />
              <path d="M10 10.500l1 3.500H9z" stroke="#d8581d" />
            </Ic>
            <FxBtn>效果 <Down s={8} /></FxBtn>
          </FxCol>
          <Corner r={4} />
        </Group>
        <Group $noline $pl={9}>
          <Gallery $w={225}>
            <AbcTile $kind="plain">Abc</AbcTile>
            <AbcTile $kind="solid">Abc</AbcTile>
            <AbcTile $kind="edge">Abc</AbcTile>
            <GalleryDrop />
          </Gallery>
          <Stack $ml={13}>
            <FxBtn>
              <Ic viewBox="0 0 16 18" $s={16}>
                <path d="M5 9l4-6 4 4-3 4M4 3l3 2" stroke="#555" />
                <rect x="0.500" y="12" width="15" height="5" rx="1.500" fill="#e0762f" stroke="#c9651f" />
              </Ic>
              填充 <Down s={8} />
            </FxBtn>
            <FxBtn>
              <Ic viewBox="0 0 16 18" $s={16}>
                <path d="M2.500 12V1.500h11V12M5 12V4h6v8" stroke="#555" />
                <rect x="0.500" y="12" width="15" height="5" rx="1.500" fill="#4a86c5" stroke="#3a75b5" />
              </Ic>
              轮廓 <Down s={8} />
            </FxBtn>
          </Stack>
          <FxCol $ml={13}>
            <Ic viewBox="0 0 20 24" $s={24}>
              <path d="M10 1l8 5v11l-8 5-8-5V6zM2 6l5 3M18 6l-5 3M10 16v6" />
              <circle cx="10" cy="11" r="3.500" stroke="#2a62d8" />
            </Ic>
            <FxBtn>效果 <Down s={8} /></FxBtn>
          </FxCol>
          <Corner r={-14} />
        </Group>
      </Ribbon>

      <Work>
        <LeftCol>
          <FormulaRow>
            <NameBox>
              矩形 3
              <ChevronDown size={13} strokeWidth={1} color="#bbb" />
            </NameBox>
            <FormulaBox>
              <Ic viewBox="0 0 16 16" $s={16}>
                <circle cx="7" cy="7" r="5.500" />
                <path d="M5 7h4M11 11l3.500 3.500" />
              </Ic>
              <FxText>fx</FxText>
              <VSep $h={20} />
            </FormulaBox>
          </FormulaRow>
          <SheetWrap>
            <Grid>
              <CornerCell />
              {COLS.map((c) => (
                <ColHead key={c}>{c}</ColHead>
              ))}
              <ColHead />
              {rows.map((r) => (
                <React.Fragment key={r}>
                  <RowHead>{r + 1}</RowHead>
                  {COLS.map((c, ci) => {
                    const value = ci < 2 && DATA[r] ? DATA[r][ci] : "";
                    return (
                      <Cell key={c} $num={ci === 1 && r > 0}>
                        {value}
                      </Cell>
                    );
                  })}
                  <Cell />
                </React.Fragment>
              ))}
            </Grid>
            <VScroll>
              <ScrollStub />
              <ScrollArrow $mt={7} />
              <ScrollThumb />
              <ScrollArrow $down $mt={38} />
            </VScroll>
          </SheetWrap>
          <SheetBar>
            <SheetNav>
              <Ic viewBox="0 0 10 12" $s={10}>
                <path d="M1 1v10M8 1L3 6l5 5" />
              </Ic>
              <Ic viewBox="0 0 10 12" $s={10}>
                <path d="M7 1L2 6l5 5" />
              </Ic>
              <Ic viewBox="0 0 10 12" $s={10}>
                <path d="M3 1l5 5-5 5" />
              </Ic>
              <Ic viewBox="0 0 10 12" $s={10}>
                <path d="M9 1v10M2 1l5 5-5 5" />
              </Ic>
            </SheetNav>
            <SheetTab>Sheet2</SheetTab>
            <SheetTab $active>Sheet1</SheetTab>
            <AddSheet>
              <Plus size={14} strokeWidth={2.2} />
            </AddSheet>
            <HScroll>
              <HTick />
              <HArrow />
              <HThumb />
              <HArrow $right />
              <HTick />
            </HScroll>
          </SheetBar>
        </LeftCol>

        <Panel>
          <PanelHead>
            属性
            <Down />
            <PanelHeadRight>
              <Pin size={14} strokeWidth={1.2} style={{ transform: "rotate(40deg)" }} />
              <X size={15} strokeWidth={1.2} />
            </PanelHeadRight>
          </PanelHead>
          <Segment>
            <SegmentItem $active>形状选项</SegmentItem>
            <SegmentItem>文本选项</SegmentItem>
          </Segment>
          <SubTabs>
            <SubTab $active>填充与线条</SubTab>
            <SubTab>效果</SubTab>
            <SubTab>大小与属性</SubTab>
          </SubTabs>
          <PropRow $mt={16}>
            <PropArrow />
            <PropLabel>填充</PropLabel>
            <PropSelect>
              无 <ChevronDown size={13} strokeWidth={1.2} />
            </PropSelect>
          </PropRow>
          <PropRow $mt={34}>
            <PropArrow />
            <PropLabel>线条</PropLabel>
            <PropSelect>
              无 <ChevronDown size={13} strokeWidth={1.2} />
            </PropSelect>
          </PropRow>
        </Panel>

        <SideBar>
          <SideBtn $mb={0}><Minus size={16} strokeWidth={1.5} color="#888" /></SideBtn>
          <SideBtn>
            <MousePointer2 size={20} strokeWidth={1.1} />
          </SideBtn>
          <SideBtn $on>
            <Ic viewBox="0 0 18 18" $s={18}>
              <path d="M1 5h4M9 5h8M1 13h8M13 13h4" />
              <circle cx="7" cy="5" r="2" />
              <circle cx="11" cy="13" r="2" />
            </Ic>
          </SideBtn>
          <SideBtn $off>
            <Ic viewBox="0 0 18 18" $s={18}>
              <path d="M5 2h11v10M2 2v13M13 6l2-2 2 2M5 15h9M7 13l-2 2 2 2" />
            </Ic>
          </SideBtn>
          <SideBtn>
            <Ic viewBox="0 0 18 18" $s={18}>
              <path d="M7 16H3V7c0-3 3-5 6-5h5l2 3v2M6 16V9M9 16c0-3 1-5 3-7 1 3 0 5-3 7zM14 16c-1-1-1-3 1-5 1 2 1 4-1 5z" />
            </Ic>
          </SideBtn>
          <SideBtn>
            <Tools />
          </SideBtn>
          <SideBtn>
            <Ic viewBox="0 0 18 18" $s={18}>
              <path d="M8 16l-6-2V2l6 2 7-2v6M8 4v7" />
              <circle cx="12" cy="12" r="3" />
              <path d="M14 14l3 3" />
            </Ic>
          </SideBtn>
          <SideBtn><CircleHelp size={17} strokeWidth={1.1} /></SideBtn>
          <SideBtn><Ellipsis size={18} strokeWidth={1.2} /></SideBtn>
        </SideBar>
      </Work>

      <StatusBar>
        <VbIcon viewBox="0 0 15 14">
          <text x="0" y="6">VB</text>
          <path d="M10 1h4v5h-3v7H2.500V8H7" />
        </VbIcon>
        <StatusGroup>
          <StatusBtn $w={30}>
            <Ic viewBox="0 0 16 16" $s={16}>
              <path d="M1 8c2-3 4.500-4.500 7-4.500S13 5 15 8c-2 3-4.500 4.500-7 4.500S3 11 1 8z" />
              <circle cx="8" cy="8" r="2" />
            </Ic>
          </StatusBtn>
          <StatusBtn $w={40} $ml={2}>
            <Ic viewBox="0 0 16 16" $s={16}>
              <rect x="4" y="4" width="8" height="8" rx="1.500" />
              <path d="M1 6V4M1 12v-2M15 6V4M15 12v-2M6 1h4M6 15h4" />
            </Ic>
            <Down s={8} />
          </StatusBtn>
          <VSep $h={16} $ml={8} $mr={10} />
          <StatusBtn $w={24} $on>
            <Ic viewBox="0 0 16 16" $s={16}>
              <rect x="2" y="2" width="12" height="12" />
              <path d="M2 6h12M6 6v8" />
            </Ic>
          </StatusBtn>
          <StatusBtn $w={32} $ml={5}>
            <Ic viewBox="0 0 16 16" $s={16}>
              <rect x="2" y="2" width="12" height="12" />
              <path d="M8 2v12" />
            </Ic>
          </StatusBtn>
          <StatusBtn $w={32}>
            <Ic viewBox="0 0 16 16" $s={16}>
              <path d="M3 2h10v9H3zM1 14h14" />
            </Ic>
          </StatusBtn>
          <VSep $h={16} $ml={2} $mr={1} />
          <ZoomText>145%</ZoomText>
          <ChevronDown size={9} strokeWidth={2} style={{ marginLeft: 12 }} />
          <Minus size={13} strokeWidth={1.6} style={{ marginLeft: 17 }} />
          <Slider />
          <Plus size={12} strokeWidth={1.6} />
          <Maximize size={14} strokeWidth={1.2} style={{ marginLeft: 26 }} />
        </StatusGroup>
      </StatusBar>

      <Arrow viewBox="0 0 100 170">
        <defs>
          <filter id="arrow-shadow" x="-30%" y="-10%" width="160%" height="120%">
            <feDropShadow dx="2" dy="1" stdDeviation="1.500" floodColor="#000" floodOpacity="0.45" />
          </filter>
        </defs>
        <g fill="#e60000" filter="url(#arrow-shadow)">
          <path d="M10 8L12 7 79 139 75 141z" />
          <path d="M70 139L81 131 86 159z" />
        </g>
      </Arrow>

      <Shape>
        <ShapeText>极光下载站</ShapeText>
        <Caret />
        <Handle $x={0} $y={0} />
        <Handle $x={50} $y={0} />
        <Handle $x={100} $y={0} />
        <Handle $x={0} $y={50} />
        <Handle $x={100} $y={50} />
        <Handle $x={0} $y={100} />
        <Handle $x={50} $y={100} />
        <Handle $x={100} $y={100} />
        <RotateHandle>
          <Ic viewBox="0 0 12 12" $s={12} style={{ strokeWidth: 2 }}>
            <path d="M10 6a4 4 0 11-1.500-3M9 1v2.500H6.500" />
          </Ic>
        </RotateHandle>
      </Shape>

      <MiniBar>
        <MiniCollapse>
          <Minus size={10} strokeWidth={2.5} />
        </MiniCollapse>
        <MiniBtn $tint="#2a62d8">
          <Ic viewBox="0 0 18 18" $s={18}>
            <path d="M14 2l2 2-6 7-3-2zM7 9l3 2-3 5H4z" />
          </Ic>
        </MiniBtn>
        <MiniBtn>
          <Ic viewBox="0 0 18 18" $s={18}>
            <path d="M5 9l4-6 4 4-3 4M4 3l3 2" />
            <rect x="1.500" y="11" width="15" height="6" rx="1.500" fill="#e0762f" stroke="#c9651f" />
          </Ic>
        </MiniBtn>
        <MiniBtn>
          <Ic viewBox="0 0 18 18" $s={18}>
            <path d="M3 12V2h12v10M5.500 12V5h7v7" />
            <rect x="1.500" y="12" width="15" height="5" rx="1.500" fill="#4a86c5" stroke="#3a75b5" />
          </Ic>
        </MiniBtn>
        <MiniBtn>
          <Tools />
        </MiniBtn>
      </MiniBar>

      <Watermark>
        <WmText>
          <WmTitle>电脑技术网</WmTitle>
          <WmUrl>www.tagxp.com</WmUrl>
        </WmText>
        <TagLogo>TAG</TagLogo>
      </Watermark>

      <Widget>
        <WidgetLine>
          <WidgetValue $c="#2e8ff0">↑</WidgetValue>
          <WidgetValue $c="#111">0K/s</WidgetValue>
        </WidgetLine>
        <WidgetLine>
          <span>CPU</span>
          <WidgetValue $c="#2fd070">27℃</WidgetValue>
        </WidgetLine>
      </Widget>
      <Gauge>
        75<small>%</small>
      </Gauge>
      <WidgetPlus>
        <Plus size={11} strokeWidth={3} />
      </WidgetPlus>
      <XzLogo viewBox="0 0 42 42">
        <path d="M38 2C20 2 2 12 2 26c0 8 10 12 22 10-10-1-16-4-16-10C8 14 24 6 38 2z" fill="#5f9fd8" />
        <path d="M40 14c-8-3-24 0-24 10 0 5 6 7 12 6 6-1 12-7 12-16z" fill="#8cc46a" />
        <circle cx="23" cy="23" r="4" fill="#fff" />
      </XzLogo>
      <XzText>
        极光下载站
        <XzUrl>www.xz7.com</XzUrl>
      </XzText>
      <ImeTip>CH ㇀ 简</ImeTip>
    </Page>
  );
};

export default App;
